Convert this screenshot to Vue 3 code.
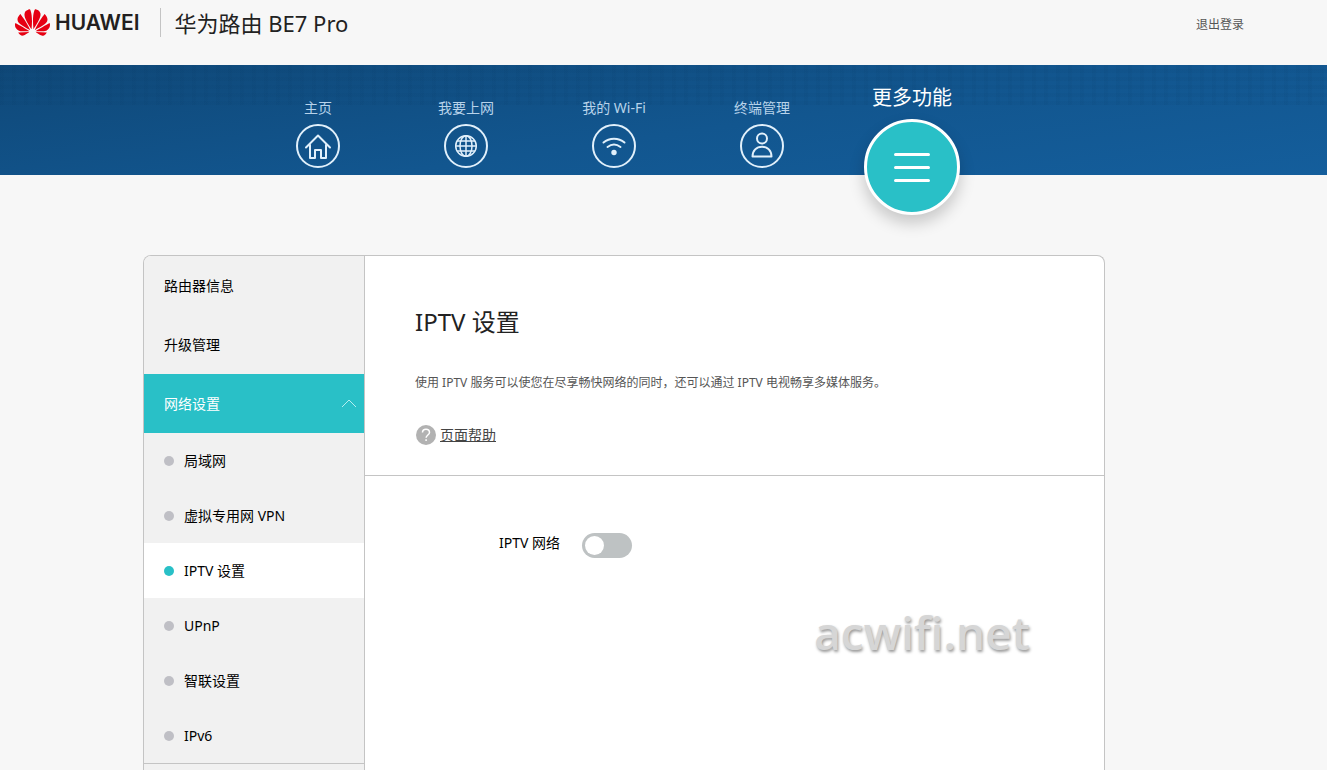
<template>
  <div class="page">
    <header class="header">
      <a class="logo" href="#">
        <svg class="logo-mark" viewBox="0 2.9 24 18.2" aria-hidden="true">
          <path d="M3.67 6.14S1.82 7.91 1.72 9.78v.35c.08 1.51 1.22 2.4 1.22 2.4 1.83 1.79 6.26 4.04 7.3 4.55 0 0 .06.03.1-.01l.02-.04v-.04C7.52 10.8 3.67 6.14 3.67 6.14zM9.65 18.6c-.02-.08-.1-.08-.1-.08l-7.38.26c.8 1.43 2.15 2.53 3.56 2.2.96-.25 3.16-1.78 3.88-2.3.06-.05.04-.09.04-.09zm.08-.78C6.49 15.63.21 12.28.21 12.28c-.15.46-.2.9-.21 1.3v.07c0 1.07.4 1.82.4 1.82.8 1.69 2.34 2.2 2.34 2.2.7.3 1.4.31 1.4.31.12.02 4.4 0 5.54 0 .05 0 .08-.05.08-.05v-.06c0-.03-.03-.05-.03-.05zM9.06 3.19a3.42 3.42 0 00-2.57 3.15v.41c.03.6.16 1.05.16 1.05.66 2.9 3.86 7.65 4.55 8.65.05.05.1.03.1.03a.1.1 0 00.06-.1c1.06-10.6-1.11-13.42-1.11-13.42-.32.02-1.19.23-1.19.23zm8.299 2.27s-.49-1.8-2.44-2.28c0 0-.57-.14-1.17-.22 0 0-2.18 2.81-1.12 13.43.01.07.06.08.06.08.07.03.1-.03.1-.03.72-1.03 3.9-5.76 4.55-8.64 0 0 .36-1.4.02-2.34zm-2.92 13.07s-.07 0-.09.05c0 0-.01.07.03.1.7.51 2.85 2 3.88 2.3 0 0 .16.05.43.06h.14c.69-.02 1.9-.37 3-2.26l-7.4-.25zm7.83-8.41c.14-2.06-1.94-3.97-1.94-3.98 0 0-3.85 4.66-6.67 10.8 0 0-.03.08.02.13l.04.01h.06c1.06-.53 5.46-2.77 7.28-4.54 0 0 1.15-.93 1.21-2.42zm1.52 2.14s-6.28 3.37-9.52 5.55c0 0-.05.04-.03.11 0 0 .03.06.07.06 1.16 0 5.56 0 5.67-.02 0 0 .57-.02 1.27-.29 0 0 1.56-.5 2.37-2.27 0 0 .73-1.45.17-3.14z" />
        </svg>
        <span class="logo-text">HUAWEI</span>
      </a>
      <span class="product">华为路由 BE7 Pro</span>
      <a class="logout" href="#">退出登录</a>
    </header>

    <div class="banner">
      <nav class="nav">
        <a
          v-for="item in navs"
          :key="item.id"
          href="#"
          class="nav-item"
          :class="{ active: item.id === activeNav }"
          @click.prevent="activeNav = item.id"
        >
          <span class="nav-label">{{ item.label }}</span>
          <span class="nav-icon">
            <svg v-if="item.id === 'home'" viewBox="0 0 40 40">
              <path d="M8 21.500L20 9.500l12 12M12 19v13h5v-8h6v8h5V19" />
            </svg>
            <svg v-else-if="item.id === 'internet'" class="thin" viewBox="0 0 40 40">
              <circle cx="20" cy="20" r="10.300" />
              <ellipse cx="20" cy="20" rx="6" ry="10.300" />
              <path d="M20 10v20M10 20h20M11.500 15h17M11.500 25h17" />
            </svg>
            <svg v-else-if="item.id === 'wifi'" viewBox="0 0 40 40">
              <path d="M9.500 16.500c6-5 15-5 21 0M13.500 21c4-3 9-3 13 0" />
              <circle class="fill" cx="20" cy="26.500" r="2.700" />
            </svg>
            <svg v-else-if="item.id === 'device'" viewBox="0 0 40 40">
              <circle cx="20" cy="12.500" r="5" />
              <path d="M10.500 30.500c0-6 4-9.800 9.500-9.800s9.500 3.800 9.500 9.800z" />
            </svg>
            <svg v-else class="menu" viewBox="0 0 90 90">
              <path d="M28.500 32.500h33M28.500 45.500h33M28.500 58.500h33" />
            </svg>
          </span>
        </a>
      </nav>
    </div>

    <main class="main">
      <div class="panel">
        <aside class="sidebar">
          <a v-for="m in menus" :key="m" class="menu-item" href="#">{{ m }}</a>
          <button class="menu-item open" type="button" @click="expanded = !expanded">
            网络设置
            <svg class="arrow" viewBox="0 0 16 9"><path d="M1 8l7-7 7 7" /></svg>
          </button>
          <div v-show="expanded" class="submenu">
            <a
              v-for="s in subMenus"
              :key="s"
              class="sub-item"
              :class="{ current: s === activeSub }"
              href="#"
              @click.prevent="activeSub = s"
            >{{ s }}</a>
          </div>
        </aside>

        <section class="content">
          <div class="intro">
            <h1>IPTV 设置</h1>
            <p>使用 IPTV 服务可以使您在尽享畅快网络的同时，还可以通过 IPTV 电视畅享多媒体服务。</p>
            <a class="help" href="#">
              <svg viewBox="0 0 20 20" aria-hidden="true">
                <circle cx="10" cy="10" r="10" />
                <path d="M6.500 7.500c0-4.500 7-4.500 7 0 0 2.500-3.400 2.600-3.400 5.300" />
                <path d="M10.100 14.300v1.700" />
              </svg>
              <span>页面帮助</span>
            </a>
          </div>
          <div class="setting">
            <label for="iptv">IPTV 网络</label>
            <input id="iptv" v-model="iptvOn" class="switch" type="checkbox">
          </div>
          <span class="watermark">acwifi.net</span>
        </section>
      </div>
    </main>
  </div>
</template>

<script setup>
import { ref } from 'vue'

const navs = [
  { id: 'home', label: '主页' },
  { id: 'internet', label: '我要上网' },
  { id: 'wifi', label: '我的 Wi-Fi' },
  { id: 'device', label: '终端管理' },
  { id: 'more', label: '更多功能' }
]
const menus = ['路由器信息', '升级管理']
const subMenus = ['局域网', '虚拟专用网 VPN', 'IPTV 设置', 'UPnP', '智联设置', 'IPv6']

const activeNav = ref('more')
const activeSub = ref('IPTV 设置')
const expanded = ref(true)
const iptvOn = ref(false)
</script>

<style>
body {
  margin: 0;
  background: #f7f7f7;
}
</style>

<style scoped>
.page {
  display: flex;
  flex-direction: column;
  height: 100vh;
  overflow: hidden;
  background: #f7f7f7;
  color: #000;
  font-family: "Noto Sans", "Noto Sans CJK SC", sans-serif;
  font-size: 14px;
  line-height: 20px;
}

.page * {
  box-sizing: border-box;
}

a {
  color: inherit;
  text-decoration: none;
}

/* 顶部 */
.header {
  flex: none;
  display: flex;
  align-items: flex-start;
  height: 65px;
  padding: 8px 83px 0 15px;
}

.logo {
  display: flex;
  align-items: center;
  height: 29px;
  padding-right: 20px;
  border-right: 1px solid #c4c4c4;
}

.logo-mark {
  width: 35px;
  height: 27px;
  fill: #e60012;
}

.logo-text {
  padding-left: 5px;
  color: #231f20;
  font-family: Inter, sans-serif;
  font-size: 21px;
  font-weight: 600;
}

.product {
  padding-left: 14px;
  color: #222;
  font-size: 22px;
  line-height: 30px;
}

.logout {
  margin-left: auto;
  color: #555;
  font-size: 12px;
  line-height: 34px;
}

/* 导航 */
.banner {
  flex: none;
  height: 110px;
  padding-right: 79px;
  background:
    repeating-linear-gradient(90deg, rgba(4, 50, 90, 0.06) 0 4px, transparent 4px 12px),
    repeating-linear-gradient(0deg, rgba(4, 50, 90, 0.06) 0 4px, transparent 4px 8px),
    linear-gradient(172deg, #0f4878 0%, #12568f 55%, #145e9c 100%);
  background-size: 100% 40px, 100% 40px, auto;
  background-repeat: no-repeat;
}

.nav {
  display: flex;
  max-width: 962px;
  margin: 0 auto;
  padding-left: 101px;
}

.nav-item {
  display: flex;
  flex-direction: column;
  align-items: center;
  gap: 6px;
  width: 148px;
  padding-top: 33px;
  color: #b8d3ea;
}

.nav-icon {
  width: 44px;
  height: 44px;
  border: 2px solid #e1f0fb;
  border-radius: 50%;
}

.nav-icon svg {
  display: block;
  width: 100%;
  height: 100%;
  fill: none;
  stroke: #e1f0fb;
  stroke-width: 2;
  stroke-linejoin: round;
  stroke-linecap: round;
}

.nav-icon .thin {
  stroke-width: 1.500;
}

.nav-icon .fill {
  fill: #e1f0fb;
  stroke: none;
}

.nav-item.active {
  position: relative;
  width: 152px;
  padding-top: 18px;
  color: #fff;
  font-size: 20px;
  line-height: 30px;
}

.active .nav-icon {
  width: 96px;
  height: 96px;
  border: 3px solid #fff;
  background: #29c0c7;
  box-shadow: 0 8px 16px rgba(0, 0, 0, 0.2);
}

.nav-icon .menu {
  stroke: #fff;
  stroke-width: 3;
}

/* 主体 */
.main {
  flex: 1;
  display: flex;
  min-height: 0;
  padding: 80px 79px 0 0;
}

.panel {
  display: flex;
  width: 100%;
  max-width: 962px;
  margin: 0 auto;
  border: 1px solid #c4c4c4;
  border-bottom: none;
  border-radius: 8px 8px 0 0;
  background: #fff;
  overflow: hidden;
}

.sidebar {
  flex: none;
  width: 221px;
  border-right: 1px solid #c4c4c4;
  background: #f1f1f1;
}

.menu-item {
  display: flex;
  align-items: center;
  justify-content: space-between;
  width: 100%;
  height: 59px;
  padding: 0 7px 0 20px;
  border: none;
  background: none;
  font: inherit;
}

.menu-item.open {
  background: #29c0c7;
  color: #fff;
  cursor: pointer;
}

.arrow {
  width: 16px;
  height: 9px;
  fill: none;
  stroke: #b5eef0;
}

.submenu {
  border-bottom: 1px solid #c4c4c4;
}

.sub-item {
  display: flex;
  align-items: center;
  gap: 10px;
  height: 55px;
  padding-left: 20px;
}

.sub-item::before {
  content: "";
  width: 10px;
  height: 10px;
  border-radius: 50%;
  background: #bfbfc5;
}

.sub-item.current {
  background: #fff;
}

.sub-item.current::before {
  background: #29c0c7;
}

.content {
  position: relative;
  flex: 1;
}

.intro {
  height: 220px;
  padding: 50px 50px 0;
  border-bottom: 1px solid #c4c4c4;
}

h1 {
  margin: 0;
  color: #222;
  font-size: 24px;
  font-weight: 400;
  line-height: 32px;
}

p {
  margin: 35px 0 32px;
  color: #555;
  font-size: 12px;
  line-height: 20px;
}

.help {
  display: inline-flex;
  align-items: center;
  gap: 4px;
  padding-left: 1px;
  color: #444;
}

.help svg {
  width: 20px;
  height: 20px;
  fill: #b2b2b2;
}

.help path {
  fill: none;
  stroke: #fff;
  stroke-width: 1.500;
}

.help span {
  text-decoration: underline;
}

.setting {
  display: flex;
  gap: 22px;
  padding: 57px 0 0 134px;
}

.switch {
  appearance: none;
  width: 50px;
  height: 25px;
  margin: 0;
  padding: 3px;
  border-radius: 13px;
  background: #bec2c3;
  cursor: pointer;
}

.switch::before {
  content: "";
  display: block;
  width: 19px;
  height: 19px;
  border-radius: 50%;
  background: #fff;
}

.switch:checked {
  background: #29c0c7;
}

.switch:checked::before {
  margin-left: auto;
}

.watermark {
  position: absolute;
  top: 344px;
  right: 74px;
  color: #d6d6d6;
  font-family: "Open Sans", sans-serif;
  font-size: 46px;
  font-weight: 600;
  line-height: 64px;
  text-shadow: 1px 2px 3px #999;
}
</style>
